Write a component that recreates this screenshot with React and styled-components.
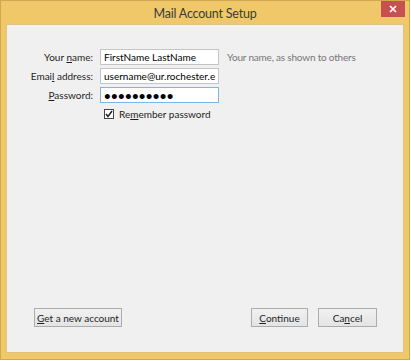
import React from "react";
import styled, { createGlobalStyle } from "styled-components";

const GlobalStyle = createGlobalStyle`
  html, body {
    margin: 0;
    padding: 0;
    background: #ffffff;
  }
  body {
    font-family: Lato, "Open Sans", "DejaVu Sans", sans-serif;
  }
`;

const Window = styled.div`
  box-sizing: border-box;
  width: 410px;
  height: 360px;
  display: flex;
  flex-direction: column;
  background: #f0c86a;
  border: 1px solid #cfa84f;
  padding: 0 5px 6px 5px;
`;

const TitleBar = styled.div`
  height: 23px;
  display: grid;
  grid-template-columns: 1fr auto 1fr;
  align-items: start;
`;

const Title = styled.div`
  grid-column: 2;
  margin-top: 5px;
  font-size: 12.5px;
  line-height: 16px;
  letter-spacing: -0.2px;
  color: #3b3b3b;
`;

const CloseButton = styled.div`
  grid-column: 3;
  justify-self: end;
  margin-right: -1px;
  width: 24px;
  height: 16px;
  background: #c75050;
  display: flex;
  align-items: center;
  justify-content: center;
`;

const Content = styled.div`
  flex: 1;
  display: flex;
  flex-direction: column;
  justify-content: space-between;
  background: #f0f0f0;
  border: 1px solid #dfc383;
  font-size: 10px;
  color: #1e1e1e;
`;

const Form = styled.div`
  display: grid;
  grid-template-columns: 86px 119px auto;
  column-gap: 7px;
  row-gap: 3px;
  padding-top: 24px;
  align-items: center;
`;

const Label = styled.label`
  text-align: right;
  white-space: nowrap;
`;

const Key = styled.span`
  text-decoration: underline;
  text-underline-offset: 1px;
`;

const Field = styled.input`
  box-sizing: border-box;
  width: 119px;
  height: 16px;
  margin: 0;
  padding: 0 3px;
  border: 1px solid ${(p) => (p.$focused ? "#7eb4ea" : "#c5c5c5")};
  background: #ffffff;
  font-family: inherit;
  font-size: 10px;
  color: #000;
  outline: none;
  &[type="password"] {
    font-size: 11.5px;
    letter-spacing: 0.3px;
    font-weight: bold;
  }
`;

const Hint = styled.span`
  color: #767676;
  white-space: nowrap;
  padding-left: 1px;
  letter-spacing: -0.2px;
`;

const CheckRow = styled.div`
  grid-column: 2 / span 2;
  display: flex;
  align-items: center;
  gap: 5px;
  padding-left: 4px;
  margin-top: 2px;
  white-space: nowrap;
`;

const CheckBox = styled.span`
  box-sizing: border-box;
  width: 10px;
  height: 10px;
  border: 1px solid #444;
  background: #fff;
  display: flex;
  align-items: center;
  justify-content: center;
`;

const ButtonBar = styled.div`
  display: flex;
  align-items: center;
  gap: 10px;
  padding: 0 26px 25px 27px;
`;

const Spacer = styled.div`
  flex: 1;
`;

const Button = styled.button`
  box-sizing: border-box;
  height: 19px;
  width: ${(p) => p.$width}px;
  margin: 0;
  padding: 0;
  border: 1px solid #acacac;
  background: linear-gradient(#f1f1f1, #e4e4e4);
  font-family: inherit;
  font-size: 10px;
  color: #1e1e1e;
  white-space: nowrap;
`;

export default function App() {
  return (
    <>
      <GlobalStyle />
      <Window>
        <TitleBar>
          <Title>Mail Account Setup</Title>
          <CloseButton>
            <svg width="8" height="8" viewBox="0 0 8 8">
              <path d="M1 1 L7 7 M7 1 L1 7" stroke="#fff" strokeWidth="1.6" />
            </svg>
          </CloseButton>
        </TitleBar>
        <Content>
          <Form>
            <Label>
              Your <Key>n</Key>ame:
            </Label>
            <Field defaultValue="FirstName LastName" readOnly />
            <Hint>Your name, as shown to others</Hint>

            <Label>
              Emai<Key>l</Key> address:
            </Label>
            <Field defaultValue="username@ur.rochester.edu" readOnly />
            <span />

            <Label>
              <Key>P</Key>assword:
            </Label>
            <Field type="password" defaultValue="abcdefghij" readOnly $focused />
            <span />

            <CheckRow>
              <CheckBox>
                <svg width="8" height="8" viewBox="0 0 8 8">
                  <path d="M1 4 L3 6.5 L7 1" stroke="#222" strokeWidth="1.5" fill="none" />
                </svg>
              </CheckBox>
              <span>
                Re<Key>m</Key>ember password
              </span>
            </CheckRow>
          </Form>
          <ButtonBar>
            <Button $width={88}>
              <Key>G</Key>et a new account
            </Button>
            <Spacer />
            <Button $width={57}>
              <Key>C</Key>ontinue
            </Button>
            <Button $width={59}>
              Ca<Key>n</Key>cel
            </Button>
          </ButtonBar>
        </Content>
      </Window>
    </>
  );
}
